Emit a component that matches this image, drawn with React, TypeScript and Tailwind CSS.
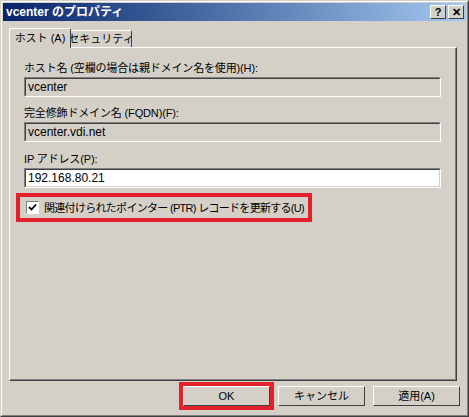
import React from 'react';

const font = { fontFamily: '"Liberation Sans", "Noto Sans CJK JP", sans-serif' };

function Field({ label, value, enabled = false, gap }: { label: string; value: string; enabled?: boolean; gap: string }) {
  return (
    <div className={gap}>
      <div className="h-[14px] text-[11px] leading-[14px] tracking-[-0.15px] text-black whitespace-nowrap">{label}</div>
      <div
        className={`mt-[2px] h-[20px] mr-[14px] border border-t-[#808080] border-l-[#808080] border-b-white border-r-white ${
          enabled ? 'bg-white' : 'bg-[#d4d0c8]'
        }`}
      >
        <div className="h-full border border-t-[#404040] border-l-[#404040] border-b-[#d4d0c8] border-r-[#d4d0c8] pl-[2px] text-[12px] leading-[16px] text-black">
          {value}
        </div>
      </div>
    </div>
  );
}

function CaptionButton({ children }: { children: React.ReactNode }) {
  return (
    <div className="w-[16px] h-[14px] bg-[#d4d0c8] border border-t-white border-l-white border-r-[#404040] border-b-[#404040] flex items-center justify-center text-[11px] font-bold leading-none text-black">
      {children}
    </div>
  );
}

function DialogButton({ label, focused = false }: { label: string; focused?: boolean }) {
  return (
    <div
      className={`w-[87px] h-[20px] bg-[#d4d0c8] border border-t-white border-l-white border-r-[#404040] border-b-[#404040] flex items-center justify-center text-[11px] font-normal text-black whitespace-nowrap ${
        focused ? 'outline-4 outline-solid outline-[#e3202b]' : ''
      }`}
    >
      {label}
    </div>
  );
}

export default function App() {
  return (
    <div
      className="w-[469px] h-[417px] bg-[#d4d0c8] border-t border-l border-t-[#d4d0c8] border-l-[#d4d0c8] border-r border-b border-r-[#404040] border-b-[#404040] select-none"
      style={font}
    >
      <div className="h-full border border-t-white border-l-white border-r-[#808080] border-b-[#808080] p-[1px] flex flex-col">
        {/* Title bar */}
        <div className="h-[18px] bg-gradient-to-r from-[#0a246a] to-[#a6caf0] flex items-center pl-[3px] pr-[2px]">
          <span className="text-white font-bold text-[12px] leading-none whitespace-nowrap">vcenter のプロパティ</span>
          <div className="ml-auto flex gap-[2px]">
            <CaptionButton>?</CaptionButton>
            <CaptionButton>✕</CaptionButton>
          </div>
        </div>

        {/* Tabs */}
        <div className="mt-[6px] ml-[6px] flex items-end h-[20px]">
          <div className="relative z-10 h-[20px] w-[62px] bg-[#d4d0c8] border-t border-l border-t-white border-l-white border-r border-r-[#404040] rounded-t-[2px] flex justify-center pt-[2px] text-[11px] leading-[14px] whitespace-nowrap -mb-[1px]">
            ホスト (A)
          </div>
          <div className="h-[17px] w-[61px] bg-[#d4d0c8] border-t border-t-white border-r border-r-[#404040] rounded-tr-[2px] flex justify-center pt-[1px] text-[11px] leading-[14px] whitespace-nowrap">
            セキュリティ
          </div>
        </div>

        {/* Tab panel */}
        <div className="ml-[6px] w-[448px] h-[334px] border border-t-white border-l-white border-r-[#404040] border-b-[#404040]">
          <div className="h-full border-r border-b border-r-[#808080] border-b-[#808080] pl-[14px] pt-[13px]">
            <Field gap="" label="ホスト名 (空欄の場合は親ドメイン名を使用)(H):" value="vcenter" />
            <Field gap="mt-[9px]" label="完全修飾ドメイン名 (FQDN)(F):" value="vcenter.vdi.net" />
            <Field gap="mt-[10px]" label="IP アドレス(P):" value="192.168.80.21" enabled />

            <div className="mt-[5px] -ml-[8px] w-[296px] h-[29px] border-4 border-[#e3202b] flex items-center pl-[6px]">
              <div className="w-[13px] h-[13px] shrink-0 bg-white border border-t-[#808080] border-l-[#808080] border-b-white border-r-white flex items-center justify-center">
                <svg width="9" height="9" viewBox="0 0 9 9">
                  <path d="M1 4 L3.5 6.5 L8 1.5" stroke="#000" strokeWidth="1.8" fill="none" />
                </svg>
              </div>
              <span className="ml-[5px] text-[11px] leading-[14px] tracking-[-0.7px] text-black whitespace-nowrap">関連付けられたポインター (PTR) レコードを更新する(U)</span>
            </div>
          </div>
        </div>

        {/* Buttons */}
        <div className="mt-[5px] flex justify-end gap-[8px] pr-[6px]">
          <DialogButton label="OK" focused />
          <DialogButton label="キャンセル" />
          <DialogButton label="適用(A)" />
        </div>
      </div>
    </div>
  );
}
